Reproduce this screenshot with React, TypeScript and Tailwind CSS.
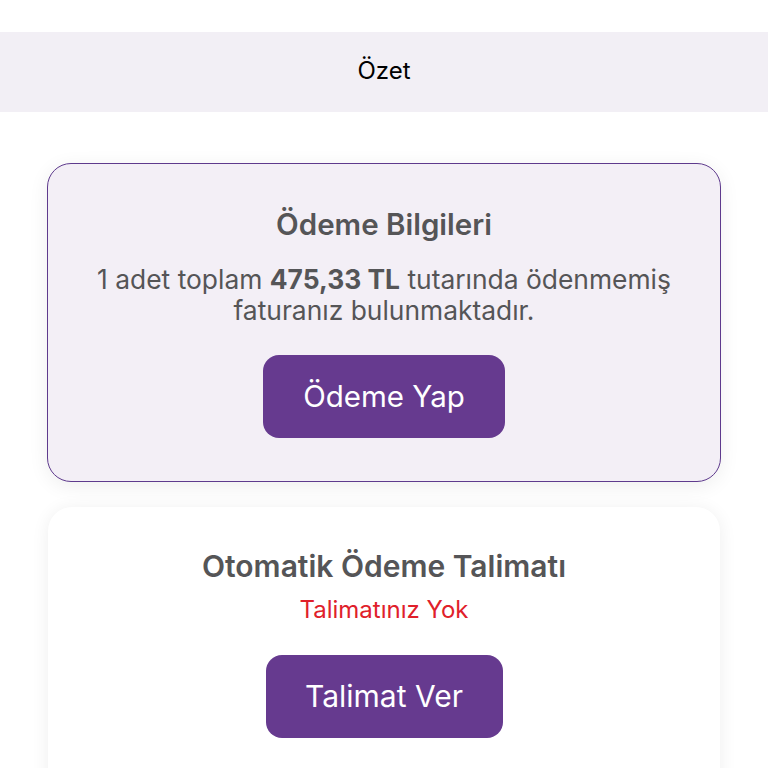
export default function App() {
  return (
    <div className="w-[768px] h-[768px] overflow-hidden bg-white" style={{ fontFamily: "Inter, 'Liberation Sans', sans-serif" }}>
      <div className="h-[32px] bg-white" />
      <div className="h-[80px] bg-[#f2eff5] flex items-center justify-center">
        <span className="text-[24px] text-black leading-[28px] pb-[2px]">Özet</span>
      </div>
      <div className="px-[47px] pt-[51px] flex flex-col gap-[25px]">
        <div className="rounded-[24px] border-[1.5px] border-[#5e3a8d] bg-[#f3eff6] shadow-[0_4px_20px_rgba(0,0,0,0.07)] h-[319px] flex flex-col items-center pt-[42px]">
          <h2 className="text-[29.5px] font-semibold text-[#555557] leading-[36px]">Ödeme Bilgileri</h2>
          <p className="mt-[22px] text-[26.4px] text-[#555557] leading-[31px] text-center">
            1 adet toplam <span className="font-bold">475,33 TL</span> tutarında ödenmemiş<br />faturanız bulunmaktadır.
          </p>
          <button className="mt-[29px] w-[242px] h-[83px] rounded-[16px] bg-[#663a8f] text-white text-[29.5px] leading-[34px] pb-[2px]">Ödeme Yap</button>
        </div>
        <div className="rounded-[24px] bg-white shadow-[0_2px_18px_rgba(0,0,0,0.07)] h-[300px] flex flex-col items-center pt-[41px] mx-[1px]">
          <h2 className="text-[30px] font-semibold text-[#555557] leading-[36px]">Otomatik Ödeme Talimatı</h2>
          <p className="mt-[11px] text-[24px] text-[#e0202a] leading-[30px]">Talimatınız Yok</p>
          <button className="mt-[30px] w-[237px] h-[83px] rounded-[16px] bg-[#663a8f] text-white text-[30px] leading-[34px] pb-[2px]">Talimat Ver</button>
        </div>
      </div>
    </div>
  );
}
